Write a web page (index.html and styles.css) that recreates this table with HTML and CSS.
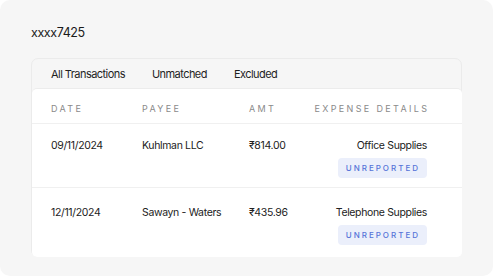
FILE: index.html
```html
<!DOCTYPE html>
<html lang="en">
<head>
<meta charset="utf-8">
<title>xxxx7425</title>
<link rel="stylesheet" href="styles.css">
</head>
<body>
<div class="card">
  <h1 class="title">xxxx7425</h1>
  <div class="panel">
    <nav class="tabs">
      <span class="tab">All Transactions</span>
      <span class="tab">Unmatched</span>
      <span class="tab">Excluded</span>
    </nav>
    <div class="table">
      <div class="row head">
        <span>Date</span>
        <span>Payee</span>
        <span>Amt</span>
        <span class="right">Expense Details</span>
      </div>
      <div class="row body first">
        <span>09/11/2024</span>
        <span>Kuhlman LLC</span>
        <span>₹814.00</span>
        <div class="details">
          <span>Office Supplies</span>
          <span class="badge">Unreported</span>
        </div>
      </div>
      <div class="row body">
        <span>12/11/2024</span>
        <span>Sawayn - Waters</span>
        <span>₹435.96</span>
        <div class="details">
          <span>Telephone Supplies</span>
          <span class="badge">Unreported</span>
        </div>
      </div>
    </div>
  </div>
</div>
</body>
</html>
```
FILE: styles.css
```css
html, body {
  margin: 0;
  background: #ffffff;
}
body {
  font-family: Inter, "Noto Sans", sans-serif;
  color: #222222;
}
.card {
  width: 493px;
  height: 276px;
  box-sizing: border-box;
  background: #f6f6f6;
  border-radius: 10px;
  padding: 25px 31px 0 31px;
}
.title {
  margin: 0;
  font-size: 12.5px;
  font-weight: 400;
  letter-spacing: -0.4px;
  line-height: 16px;
  color: #1a1a1a;
}
.panel {
  margin-top: 17px;
  width: 431px;
  height: 199px;
  box-sizing: border-box;
  border: 1px solid #ebebeb;
  border-radius: 7px;
  background: #f6f6f6;
  display: flex;
  flex-direction: column;
}
.tabs {
  display: flex;
  gap: 27px;
  height: 29px;
  align-items: center;
  padding-left: 19px;
  font-size: 11px;
  letter-spacing: -0.55px;
  color: #1f1f1f;
}
.table {
  flex: 1;
  background: #ffffff;
  border-top: 1px solid #ececec;
  border-radius: 5px;
  margin: 0 -1px -1px 0;
}
.row {
  display: grid;
  grid-template-columns: 91px 107px 64px 1fr;
  padding: 0 35px 0 19px;
  font-size: 10.5px;
  letter-spacing: -0.35px;
  line-height: 14px;
  white-space: nowrap;
}
.row.head {
  height: 35px;
  align-items: center;
  padding-top: 5px;
  box-sizing: border-box;
  font-size: 9px;
  letter-spacing: 2.35px;
  text-transform: uppercase;
  color: #8a8a8a;
  border-bottom: 1.5px solid #f0f0f0;
}
.right {
  text-align: right;
  margin-right: -2.35px;
}
.row.body {
  padding-top: 18px;
  padding-bottom: 10px;
  color: #222222;
}
.row.body.first {
  padding-top: 15px;
  padding-bottom: 9px;
  border-bottom: 1.5px solid #f0f0f0;
}
.details {
  display: flex;
  flex-direction: column;
  align-items: flex-end;
  gap: 5px;
}
.badge {
  display: inline-block;
  background: #ebeffb;
  color: #5674d8;
  font-size: 8px;
  font-weight: 500;
  letter-spacing: 2px;
  text-transform: uppercase;
  line-height: 20px;
  height: 20px;
  padding: 0 7px 0 8px;
  border-radius: 4px;
}
```
